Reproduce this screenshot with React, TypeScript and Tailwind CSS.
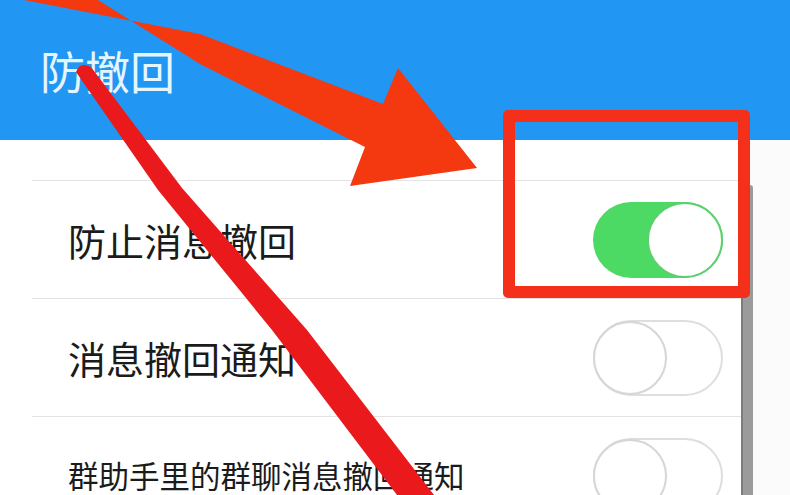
import React from "react";

function ToggleOn() {
  return (
    <div className="w-[130px] h-[76px] rounded-full bg-[#4cd964] flex items-center justify-end">
      <div className="w-[76px] h-[76px] rounded-full bg-white border-[2px] border-[#5ccf6f]" />
    </div>
  );
}

function ToggleOff() {
  return (
    <div className="w-[130px] h-[76px] rounded-full bg-white border-[2px] border-[#dedede] flex items-center">
      <div className="w-[74px] h-[74px] -ml-[2px] rounded-full bg-white border-[2px] border-[#d6d6d6]" />
    </div>
  );
}

function Row({ label, big, on }: { label: string; big: boolean; on: boolean }) {
  return (
    <div className="h-[118px] border-t border-[#e3e3e3] flex items-center justify-between pl-[36px] pr-[18px]">
      <span className={big ? "text-[38px] leading-none text-[#1b1b1b]" : "text-[30.5px] leading-none text-[#1b1b1b]"}>{label}</span>
      {on ? <ToggleOn /> : <ToggleOff />}
    </div>
  );
}

export default function App() {
  return (
    <div
      className="relative w-[790px] h-[495px] overflow-hidden bg-[#fbfbfb]"
      style={{ fontFamily: '"Noto Sans CJK SC", "Noto Sans", sans-serif' }}
    >
      <header className="h-[140px] bg-[#2196f2] flex items-center pl-[40px]">
        <span className="text-[45px] leading-none text-[#e4f6fc]">防撤回</span>
      </header>
      <div className="flex">
        <div className="w-[741px] bg-white pt-[40px]">
          <div className="ml-[32px]">
            <Row label="防止消息撤回" big on />
            <Row label="消息撤回通知" big on={false} />
            <Row label="群助手里的群聊消息撤回通知" big={false} on={false} />
          </div>
        </div>
        <div className="w-[12px] h-[320px] mt-[45px] bg-[#9b9b9b] border-l-[2px] border-[#7d7d7d] rounded-t-[3px]" />
        <div className="flex-1" />
      </div>

      <div className="absolute left-[503px] top-[110px] w-[247px] h-[188px] border-[12px] border-[#f5301a] rounded-[5px]" />

      <svg className="absolute inset-0 pointer-events-none" width="790" height="495" viewBox="0 0 790 495">
        <polygon
          points="24,0 200,34 383,104 398,68 477,168 350,186 365,147 200,64 98,0"
          fill="#f4380f"
        />
        <path
          d="M 76 72 Q 80 61 91 67 L 182 188 L 307 330 L 434 495 L 397 495 L 272 330 L 158 190 Z"
          fill="#ea1a1c"
        />
      </svg>
    </div>
  );
}
